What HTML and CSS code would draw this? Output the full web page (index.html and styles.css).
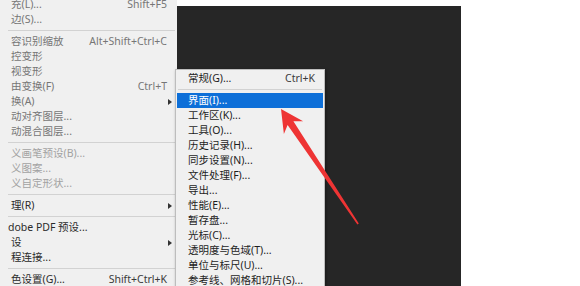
FILE: index.html
```html
<!DOCTYPE html>
<html lang="zh-CN">

<head>
  <meta charset="UTF-8" />
  <title>编辑菜单 - 首选项</title>
  <link rel="stylesheet" href="styles.css">
</head>

<body>

  <div class="screen">

    <!-- 编辑菜单（左侧被截掉一部分） -->
    <ul class="edit-menu">
      <li class="item dim"><span>充(L)...</span><span class="key">Shift+F5</span></li>
      <li class="item dim"><span>边(S)...</span></li>
      <li class="sep"></li>
      <li class="item dim"><span>容识别缩放</span><span class="key">Alt+Shift+Ctrl+C</span></li>
      <li class="item dim"><span>控变形</span></li>
      <li class="item dim"><span>视变形</span></li>
      <li class="item dim"><span>由变换(F)</span><span class="key">Ctrl+T</span></li>
      <li class="item dim sub"><span>换(A)</span></li>
      <li class="item dim"><span>动对齐图层...</span></li>
      <li class="item dim"><span>动混合图层...</span></li>
      <li class="sep"></li>
      <li class="item off"><span>义画笔预设(B)...</span></li>
      <li class="item off"><span>义图案...</span></li>
      <li class="item off"><span>义自定形状...</span></li>
      <li class="sep"></li>
      <li class="item sub"><span>理(R)</span></li>
      <li class="sep"></li>
      <li class="item cut"><span>dobe PDF 预设...</span></li>
      <li class="item sub"><span>设</span></li>
      <li class="item"><span>程连接...</span></li>
      <li class="sep"></li>
      <li class="item"><span>色设置(G)...</span><span class="key">Shift+Ctrl+K</span></li>
    </ul>

    <div class="workspace"></div>

    <!-- 首选项子菜单 -->
    <ul class="prefs-menu">
      <li class="item"><span>常规(G)...</span><span class="key">Ctrl+K</span></li>
      <li class="sep"></li>
      <li class="item active"><span>界面(I)...</span></li>
      <li class="item"><span>工作区(K)...</span></li>
      <li class="item"><span>工具(O)...</span></li>
      <li class="item"><span>历史记录(H)...</span></li>
      <li class="item"><span>同步设置(N)...</span></li>
      <li class="item"><span>文件处理(F)...</span></li>
      <li class="item"><span>导出...</span></li>
      <li class="item"><span>性能(E)...</span></li>
      <li class="item"><span>暂存盘...</span></li>
      <li class="item"><span>光标(C)...</span></li>
      <li class="item"><span>透明度与色域(T)...</span></li>
      <li class="item"><span>单位与标尺(U)...</span></li>
      <li class="item"><span>参考线、网格和切片(S)...</span></li>
    </ul>

    <!-- 红色标注箭头 -->
    <svg class="pointer" width="580" height="286" viewBox="0 0 580 286">
      <polygon fill="#ee3434"
        points="281,109 303.1,121.2 293.4,121.2 358.8,223.6 357.4,224.6 287.6,125.1 283.9,134.1" />
    </svg>

  </div>

</body>

</html>
```

FILE: styles.css
```css
/* Photoshop 编辑菜单 > 首选项 截图 */
body {
  margin: 0;
  background: #fff;
  font-family: "Noto Sans", "Noto Sans CJK SC", sans-serif;
  font-size: 10.5px;
  overflow: hidden;
}

ul {
  list-style: none;
  margin: 0;
  padding: 0;
}

.screen {
  position: relative;
  display: flex;
  width: 580px;
  height: 286px;
  overflow: hidden;
}

.edit-menu {
  width: 177px;
  height: 286px;
  flex-shrink: 0;
  background: #f0f0f0;
  overflow: hidden;
}

.edit-menu .item:first-child {
  margin-top: -3px;
}

.item {
  position: relative;
  display: flex;
  justify-content: space-between;
  align-items: center;
  height: 15px;
  line-height: 15px;
  white-space: nowrap;
  color: #2b2b2b;
}

.edit-menu .item {
  padding: 0 10px 0 11px;
}

.edit-menu .item.cut {
  padding-left: 8px;
}

.edit-menu .dim {
  color: #767676;
}

.edit-menu .off {
  color: #a2a2a2;
}

/* 子菜单小三角 */
.sub::after {
  content: "";
  position: absolute;
  right: 5px;
  top: 5px;
  border-left: 4px solid #333;
  border-top: 3px solid transparent;
  border-bottom: 3px solid transparent;
}

.sep {
  height: 7px;
  position: relative;
}

.sep::before {
  content: "";
  position: absolute;
  left: 8px;
  right: 2px;
  top: 3px;
  border-top: 1px solid #d2d2d2;
}

.workspace {
  width: 284px;
  margin-top: 6px;
  background: #262626;
}

.prefs-menu {
  position: absolute;
  left: 175px;
  top: 69px;
  width: 148px;
  padding: 1px 0 0;
  background: #f0f0f0;
  border: 1px solid #bdbdbd;
  box-shadow: 1px 1px 3px rgba(0, 0, 0, 0.35);
}

.prefs-menu .item {
  margin: 0 1px;
  padding: 0 8px 0 11px;
  color: #1e1e1e;
}

.prefs-menu .sep::before {
  left: 2px;
  right: 2px;
}

.prefs-menu .active {
  background: #0d6fd8;
  color: #fff;
}

.key {
  color: #3a3a3a;
}

.edit-menu .dim .key {
  color: #767676;
}

.pointer {
  position: absolute;
  left: 0;
  top: 0;
  pointer-events: none;
}
```
